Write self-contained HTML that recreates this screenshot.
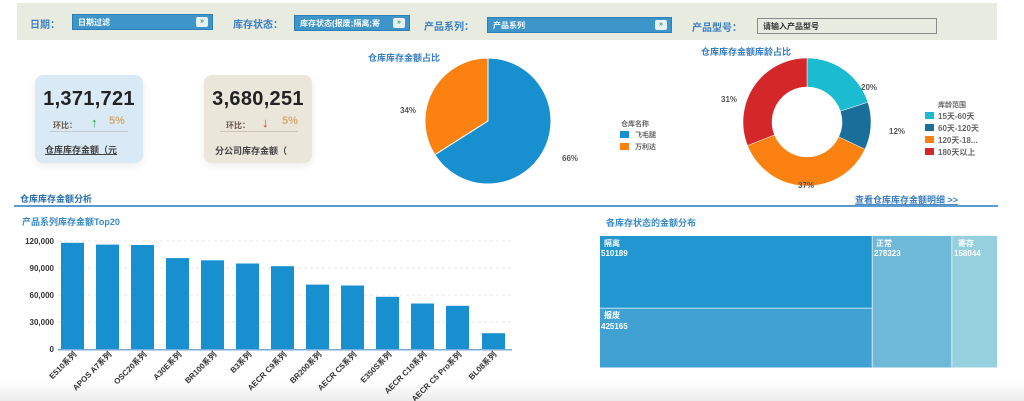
<!DOCTYPE html><html><head><meta charset="utf-8"><style>
*{margin:0;padding:0;box-sizing:border-box}
body{width:1024px;height:401px;overflow:hidden;background:#fff;font-family:"Liberation Sans","Noto Sans CJK SC",sans-serif;position:relative}
.a{position:absolute;white-space:nowrap}
.lbl{font-size:10px;font-weight:bold;color:#3a7fc0}
.sel{background:#3d95c9;border:1px solid #2f7fb5;color:#fff;font-size:8px;font-weight:bold;padding:1px 5px;height:16px;line-height:13px}
.dd{position:absolute;right:4px;top:2px;width:12px;height:10px;background:#e8f2f8;border-radius:2px;color:#3a9a5a;font-size:7px;line-height:10px;text-align:center}
.card{position:absolute;border-radius:8px;box-shadow:0 3px 8px rgba(0,0,0,.08)}
.num{position:absolute;width:100%;text-align:center;font-size:20px;font-weight:bold;color:#222;top:13px;letter-spacing:.3px}
</style></head><body>
<svg class="a" style="left:0;top:0" width="1024" height="401">
<defs><linearGradient id="g" x1="0" y1="0" x2="0" y2="1"><stop offset="0" stop-color="#fff"/><stop offset="1" stop-color="#ececec"/></linearGradient></defs>
<rect x="0" y="382" width="1024" height="19" fill="url(#g)"/>
</svg>
<div class="a" style="left:17px;top:3px;width:980px;height:37px;background:#e8ebe0"></div>
<div class="a lbl" style="left:30px;top:16px">日期：</div>
<div class="a sel" style="left:72px;top:14px;width:141px">日期过滤<span class="dd">»</span></div>
<div class="a lbl" style="left:233px;top:16px">库存状态：</div>
<div class="a sel" style="left:294px;top:15px;width:116px;overflow:hidden">库存状态(报废;隔离;寄<span class="dd">»</span></div>
<div class="a lbl" style="left:424px;top:18px">产品系列：</div>
<div class="a sel" style="left:487px;top:17px;width:185px">产品系列<span class="dd">»</span></div>
<div class="a lbl" style="left:692px;top:19px">产品型号：</div>
<div class="a" style="left:757px;top:18px;width:180px;height:16px;border:1px solid #8a8a8a;background:#e8ebe0;font-size:8px;font-weight:bold;color:#333;padding:2px 5px">请输入产品型号</div>

<div class="card" style="left:35px;top:75px;width:108px;height:88px;background:#dae9f6">
<div class="num">1,371,721</div>
<div class="a" style="left:18px;top:45px;font-size:8px;font-weight:bold;color:#6a5a4a">环比：</div>
<div class="a" style="left:56px;top:40px;font-size:13px;font-weight:bold;color:#2a9a3a">↑</div>
<div class="a" style="left:74px;top:40px;font-size:11px;font-weight:bold;color:#d8aa70">5%</div>
<div class="a" style="left:15px;top:56px;width:78px;border-top:1px solid #c4cad0"></div>
<div class="a" style="left:10px;top:68px;font-size:9px;font-weight:bold;color:#444;text-decoration:underline">仓库库存金额（元</div>
</div>
<div class="card" style="left:204px;top:75px;width:108px;height:88px;background:#ebe6da">
<div class="num">3,680,251</div>
<div class="a" style="left:22px;top:45px;font-size:8px;font-weight:bold;color:#6a5a4a">环比：</div>
<div class="a" style="left:58px;top:40px;font-size:13px;font-weight:bold;color:#d83030">↓</div>
<div class="a" style="left:78px;top:40px;font-size:11px;font-weight:bold;color:#d8aa70">5%</div>
<div class="a" style="left:16px;top:56px;width:78px;border-top:1px solid #c8c4b8"></div>
<div class="a" style="left:11px;top:69px;font-size:9px;font-weight:bold;color:#444">分公司库存金额（</div>
</div>

<svg class="a" style="left:0;top:0" width="1024" height="401">
<g font-family="Liberation Sans,Noto Sans CJK SC,sans-serif" font-weight="bold">
<text x="368" y="61" font-size="9" fill="#3a7fc0">仓库库存金额占比</text>
<path d="M488,121 L488,58 A63,63 0 0,0 434.8,154.8 Z" fill="#fb8111" stroke="#fff"/>
<path d="M488,121 L434.8,154.8 A63,63 0 1,0 488,58 Z" fill="#1890cf" stroke="#fff"/>
<text x="400" y="113" font-size="8" fill="#555">34%</text>
<text x="562" y="161" font-size="8" fill="#555">66%</text>
<text x="621" y="126" font-size="7" fill="#666">仓库名称</text>
<rect x="620" y="131" width="9" height="7" fill="#1890cf"/><text x="635" y="137" font-size="7" fill="#666">飞毛腿</text>
<rect x="620" y="143" width="9" height="7" fill="#fb8111"/><text x="635" y="149" font-size="7" fill="#666">万利达</text>

<text x="701" y="55" font-size="9" fill="#3a7fc0">仓库库存金额库龄占比</text>
<path d="M807,58 A64,64 0 0,1 867.9,102.2 L840.3,111.2 A35,35 0 0,0 807,87 Z" fill="#1bbcd0" stroke="#fff" stroke-width=".5"/>
<path d="M867.9,102.2 A64,64 0 0,1 864.9,149.3 L838.7,136.9 A35,35 0 0,0 840.3,111.2 Z" fill="#1a6e9a" stroke="#fff" stroke-width=".5"/>
<path d="M864.9,149.3 A64,64 0 0,1 747.5,145.6 L774.5,134.9 A35,35 0 0,0 838.7,136.9 Z" fill="#fb8111" stroke="#fff" stroke-width=".5"/>
<path d="M747.5,145.6 A64,64 0 0,1 807,58 L807,87 A35,35 0 0,0 774.5,134.9 Z" fill="#d3272a" stroke="#fff" stroke-width=".5"/>
<text x="861" y="90" font-size="8" fill="#555">20%</text>
<text x="889" y="134" font-size="8" fill="#555">12%</text>
<text x="798" y="188" font-size="8" fill="#555">37%</text>
<text x="721" y="102" font-size="8" fill="#555">31%</text>
<text x="938" y="107" font-size="7" fill="#666">库龄范围</text>
<rect x="925" y="112" width="9" height="7" fill="#1bbcd0"/><text x="938" y="119" font-size="8" fill="#666">15天-60天</text>
<rect x="925" y="124" width="9" height="7" fill="#1a6e9a"/><text x="938" y="131" font-size="8" fill="#666">60天-120天</text>
<rect x="925" y="136" width="9" height="7" fill="#fb8111"/><text x="938" y="143" font-size="8" fill="#666">120天-18...</text>
<rect x="925" y="148" width="9" height="7" fill="#d3272a"/><text x="938" y="155" font-size="8" fill="#666">180天以上</text>

<text x="20" y="202" font-size="9" fill="#2a6fb0">仓库库存金额分析</text>
<rect x="14" y="205" width="984" height="2" fill="#5b9bd0"/>
<text x="855" y="203" font-size="9" fill="#3a7fc0" text-decoration="underline">查看仓库库存金额明细 &gt;&gt;</text>

<text x="22" y="225" font-size="9" fill="#3a8ac8">产品系列库存金额Top20</text>
<g font-size="8" fill="#333" text-anchor="end">
<text x="54" y="244">120,000</text><text x="54" y="271">90,000</text><text x="54" y="298">60,000</text><text x="54" y="325">30,000</text><text x="54" y="352">0</text>
</g>
<g stroke="#ddd" stroke-dasharray="3,3" stroke-width=".7">
<line x1="58" y1="241" x2="512" y2="241"/><line x1="58" y1="268" x2="512" y2="268"/><line x1="58" y1="295" x2="512" y2="295"/><line x1="58" y1="322" x2="512" y2="322"/>
</g>
<g fill="#1890cf">
<rect x="61" y="242.8" width="23" height="106.2"/>
<rect x="96" y="244.6" width="23" height="104.4"/>
<rect x="131" y="245" width="23" height="104"/>
<rect x="166" y="258.1" width="23" height="90.9"/>
<rect x="201" y="260.3" width="23" height="88.7"/>
<rect x="236" y="263.5" width="23" height="85.5"/>
<rect x="271" y="266.2" width="23" height="82.8"/>
<rect x="306" y="284.6" width="23" height="64.4"/>
<rect x="341" y="285.5" width="23" height="63.5"/>
<rect x="376" y="296.8" width="23" height="52.2"/>
<rect x="411" y="303.5" width="23" height="45.5"/>
<rect x="446" y="305.8" width="23" height="43.2"/>
<rect x="482" y="333.2" width="23" height="15.8"/>
</g>
<rect x="58" y="349" width="454" height="1.5" fill="#7aaad8"/>
<g font-size="8" fill="#333" text-anchor="end" font-weight="bold">
<text transform="translate(77,355) rotate(-45)">E510系列</text>
<text transform="translate(112,355) rotate(-45)">APOS A7系列</text>
<text transform="translate(147,355) rotate(-45)">OSC20系列</text>
<text transform="translate(182,355) rotate(-45)">A30E系列</text>
<text transform="translate(217,355) rotate(-45)">BR100系列</text>
<text transform="translate(252,355) rotate(-45)">B3系列</text>
<text transform="translate(287,355) rotate(-45)">AECR C9系列</text>
<text transform="translate(322,355) rotate(-45)">BR200系列</text>
<text transform="translate(357,355) rotate(-45)">AECR C5系列</text>
<text transform="translate(392,355) rotate(-45)">E350S系列</text>
<text transform="translate(427,355) rotate(-45)">AECR C10系列</text>
<text transform="translate(462,355) rotate(-45)">AECR C5 Pro系列</text>
<text transform="translate(497,355) rotate(-45)">BL08系列</text>
</g>

<text x="606" y="226" font-size="9" fill="#3a8ac8">各库存状态的金额分布</text>
<rect x="600" y="236" width="272" height="72" fill="#2196d0"/>
<rect x="600" y="308.5" width="272" height="59" fill="#3fa2d3"/>
<rect x="872.5" y="236" width="79" height="131.5" fill="#6fb9d8"/>
<rect x="952" y="236" width="45" height="131.5" fill="#96d0de"/>
<g stroke="#fff" stroke-width=".7" opacity=".6"><line x1="600" y1="308" x2="872" y2="308"/><line x1="872" y1="236" x2="872" y2="367"/><line x1="952" y1="236" x2="952" y2="367"/></g>
<g font-size="8" fill="#fff">
<text x="604" y="246">隔离</text><text x="601" y="256">510189</text>
<text x="604" y="318">报废</text><text x="601" y="329">425165</text>
<text x="876" y="246">正常</text><text x="874" y="256">278323</text>
<text x="958" y="246">寄存</text><text x="954" y="256">158044</text>
</g>
</g>
</svg>
</body></html>
